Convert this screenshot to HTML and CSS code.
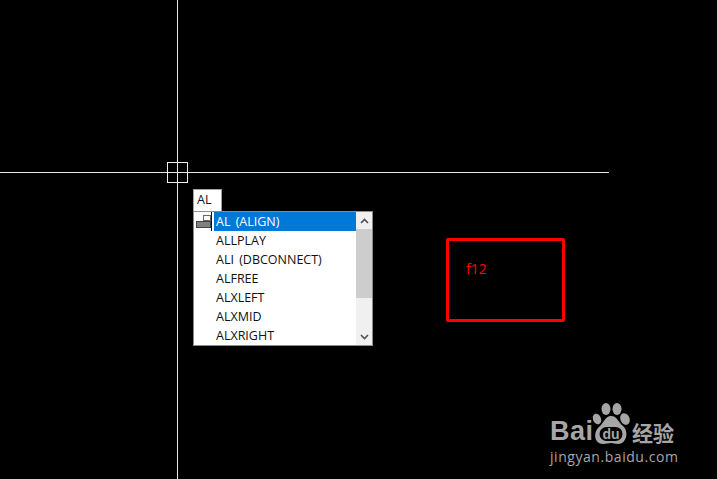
FILE: index.html
```html
<!DOCTYPE html>
<html lang="en">
<head>
    <meta charset="UTF-8">
    <meta name="viewport" content="width=device-width, initial-scale=1.0">
    <title>CAD command</title>
    <link rel="stylesheet" href="styles.css">
</head>
<body>
    <div class="canvas">
        <div class="cross-v"></div>
        <div class="cross-h"></div>
        <div class="pickbox"></div>

        <div class="cmd-input">AL</div>

        <div class="suggest">
            <div class="suggest-icons">
                <svg width="17" height="19" viewBox="0 0 17 19">
                    <rect x="7.5" y="3.5" width="7" height="5" fill="#fff" stroke="#666"/>
                    <rect x="0.5" y="9.5" width="14" height="6" fill="#808080" stroke="#444"/>
                    <rect x="15" y="0" width="1" height="19" fill="#111"/>
                </svg>
            </div>
            <div class="suggest-list">
                <div class="item active">AL (ALIGN)</div>
                <div class="item">ALLPLAY</div>
                <div class="item">ALI (DBCONNECT)</div>
                <div class="item">ALFREE</div>
                <div class="item">ALXLEFT</div>
                <div class="item">ALXMID</div>
                <div class="item">ALXRIGHT</div>
            </div>
            <div class="scrollbar">
                <div class="arrow">
                    <svg width="9" height="6" viewBox="0 0 9 6"><path d="M1 5L4.5 1.5L8 5" fill="none" stroke="#505050" stroke-width="1.6"/></svg>
                </div>
                <div class="thumb"></div>
                <div class="track"></div>
                <div class="arrow">
                    <svg width="9" height="6" viewBox="0 0 9 6"><path d="M1 1L4.5 4.5L8 1" fill="none" stroke="#505050" stroke-width="1.6"/></svg>
                </div>
            </div>
        </div>

        <div class="note">
            <span class="note-text">f12</span>
        </div>

        <div class="watermark">
            <div class="wm-top">
                <span class="wm-bai">Bai</span>
                <svg class="wm-paw" width="40" height="44" viewBox="0 0 40 44">
                    <ellipse cx="16" cy="7" rx="4.5" ry="6" fill="#a6a6a6"/>
                    <ellipse cx="27" cy="7" rx="4.5" ry="6" fill="#a6a6a6"/>
                    <ellipse cx="7" cy="17" rx="4" ry="5.5" fill="#a6a6a6" transform="rotate(-20 7 17)"/>
                    <ellipse cx="35" cy="17" rx="4.5" ry="6" fill="#a6a6a6" transform="rotate(-25 35 17)"/>
                    <path d="M21 14C27 14 28 20 33 24C39 29 37 42 28 42C25 42 23 41 21 41C19 41 16 42 13 42C4 42 3 30 9 25C14 21 15 14 21 14Z" fill="#a6a6a6"/>
                    <rect x="9.5" y="25" width="23" height="14" rx="7" fill="#000"/>
                    <text x="21" y="37" class="wm-du">du</text>
                </svg>
                <span class="wm-cn">经验</span>
            </div>
            <div class="wm-url">jingyan.baidu.com</div>
        </div>
    </div>
</body>
</html>
```
FILE: styles.css
```css
* {
    box-sizing: border-box;
    margin: 0;
    padding: 0;
}

body {
    background-color: #000;
    font-family: "Open Sans", "Noto Sans", sans-serif;
    overflow: hidden;
}

.canvas {
    position: relative;
    width: 717px;
    height: 479px;
    background-color: #000;
    overflow: hidden;
}

.cross-v {
    position: absolute;
    left: 177px;
    top: 0;
    width: 1px;
    height: 479px;
    background-color: #e8e8e8;
}

.cross-h {
    position: absolute;
    left: 0;
    top: 172px;
    width: 609px;
    height: 1px;
    background-color: #e8e8e8;
}

.pickbox {
    position: absolute;
    left: 167px;
    top: 162px;
    width: 21px;
    height: 21px;
    border: 1px solid #f0f0f0;
}

.cmd-input {
    position: absolute;
    left: 193px;
    top: 189px;
    width: 29px;
    height: 22px;
    padding: 0 0 0 3px;
    background-color: #fff;
    border: 1px solid #a0a0a0;
    border-bottom: none;
    color: #111;
    font-size: 12.5px;
    line-height: 19px;
}

.suggest {
    position: absolute;
    left: 193px;
    top: 211px;
    width: 180px;
    height: 135px;
    display: flex;
    background-color: #fff;
    border: 1px solid #8c8c8c;
}

.suggest-icons {
    width: 20px;
    padding-left: 2px;
    flex-shrink: 0;
}

.suggest-list {
    flex: 1;
    display: flex;
    flex-direction: column;
}

.item {
    height: 19px;
    padding-left: 2px;
    font-size: 12.5px;
    line-height: 19px;
    word-spacing: 2px;
    color: #111;
    white-space: nowrap;
}

.item.active {
    background-color: #0078d7;
    color: #fff;
}

.scrollbar {
    width: 16px;
    flex-shrink: 0;
    display: flex;
    flex-direction: column;
    background-color: #f0f0f0;
}

.arrow {
    height: 17px;
    display: flex;
    align-items: center;
    justify-content: center;
    flex-shrink: 0;
}

.thumb {
    height: 69px;
    background-color: #cdcdcd;
}

.track {
    flex: 1;
}

.note {
    position: absolute;
    left: 446px;
    top: 238px;
    width: 119px;
    height: 84px;
    padding: 20px 0 0 17px;
    border: 3px solid #ff0000;
    border-radius: 2px;
}

.note-text {
    display: block;
    color: #ff0000;
    font-family: "Open Sans", sans-serif;
    font-size: 14px;
    line-height: 16px;
}

.watermark {
    position: absolute;
    left: 550px;
    top: 402px;
    color: #a6a6a6;
}

.wm-top {
    display: flex;
    align-items: flex-start;
    height: 46px;
}

.wm-bai {
    margin-top: 15px;
    width: 40px;
    font-family: "Liberation Sans", sans-serif;
    font-size: 27px;
    font-weight: bold;
    line-height: 28px;
    letter-spacing: 0.5px;
}

.wm-paw {
    flex-shrink: 0;
}

.wm-du {
    fill: #a6a6a6;
    font-family: "Liberation Sans", sans-serif;
    font-size: 14px;
    font-weight: bold;
    text-anchor: middle;
}

.wm-cn {
    margin: 17px 0 0 2px;
    font-family: "Noto Sans CJK SC", sans-serif;
    font-size: 21px;
    font-weight: bold;
    line-height: 26px;
    white-space: nowrap;
}

.wm-url {
    margin-top: 1px;
    font-family: "Open Sans", sans-serif;
    font-size: 14px;
    line-height: 16px;
    letter-spacing: 0.55px;
    white-space: nowrap;
}
```
